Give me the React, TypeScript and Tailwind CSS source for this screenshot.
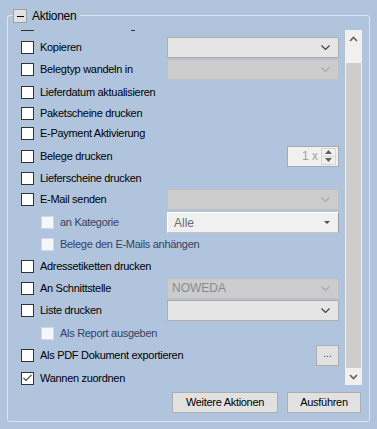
import React from 'react'

const FONT = { fontFamily: '"Liberation Sans", Arial, sans-serif' }

function Chevron({ disabled }: { disabled?: boolean }) {
  return (
    <svg width="9" height="5" viewBox="0 0 9 5" className="block">
      <polyline
        points="0.5,0.5 4.5,4.5 8.5,0.5"
        fill="none"
        stroke={disabled ? '#a9a9a9' : '#3c3c3c'}
        strokeWidth="1.1"
      />
    </svg>
  )
}

function CheckBox({ checked, dim }: { checked?: boolean; dim?: boolean }) {
  return (
    <div
      className={
        'w-[13px] h-[13px] flex-shrink-0 border flex items-center justify-center ' +
        (dim ? 'bg-[#f6f7f9] border-[#cfd8e4]' : 'bg-white border-[#333333]')
      }
    >
      {checked && (
        <svg width="9" height="8" viewBox="0 0 9 8" className="block">
          <polyline points="0.5,4 3,6.5 8.5,0.8" fill="none" stroke="#444" strokeWidth="1.1" />
        </svg>
      )}
    </div>
  )
}

function Combo({ disabled, text }: { disabled?: boolean; text?: string }) {
  return (
    <div
      className={
        'ml-auto w-[172px] h-[21px] border flex items-center pl-[4px] pr-[8px] ' +
        (disabled ? 'bg-[#cccccc] border-[#bfbfbf] text-[#8a8a8a]' : 'bg-[#e5e5e5] border-[#adadad]')
      }
    >
      <span className="flex-1 text-[12px]">{text}</span>
      <Chevron disabled={disabled} />
    </div>
  )
}

function Row({
  h,
  label,
  checked,
  sub,
  children,
}: {
  h: string
  label: string
  checked?: boolean
  sub?: boolean
  children?: React.ReactNode
}) {
  return (
    <div className={'flex items-center pr-[6px] ' + h + (sub ? ' pl-[20px]' : '')}>
      <CheckBox checked={checked} dim={sub} />
      <span
        className={
          'ml-[6px] text-[11px] tracking-[-0.3px] whitespace-nowrap ' + (sub ? 'text-[#34425f]' : 'text-black')
        }
      >
        {label}
      </span>
      {children}
    </div>
  )
}

export default function App() {
  return (
    <div className="w-[377px] h-[429px] bg-[#b0c4de] pt-[15px] pl-[7px] overflow-hidden" style={FONT}>
      <div className="relative w-[363px] h-[407px] border border-[#dde6f0] rounded-[3px] pt-[14px] pl-[6px] pr-[7px]">
        {/* legend over the frame line */}
        <div className="absolute -top-[9px] left-[5px] flex items-center bg-[#b0c4de] pr-[4px]">
          <div className="w-[14px] h-[14px] bg-[#e1e1e1] border border-[#a0a0a0] flex items-center justify-center">
            <div className="w-[7px] h-px bg-black" />
          </div>
          <span className="ml-[5px] text-[12px] tracking-[-0.3px] text-black">Aktionen</span>
        </div>

        <div className="flex h-[355px]">
          <div className="flex-1 overflow-hidden pl-[7px]">
            {/* scrolled-away row, only its bottom edge shows */}
            <div className="relative h-px">
              <div className="absolute left-0 w-[13px] h-px bg-[#333]" />
              <div className="absolute left-[110px] w-[4px] h-px bg-[#333]" />
            </div>
            <div className="mt-[5px] flex flex-col">
              <Row h="h-[22px]" label="Kopieren">
                <Combo />
              </Row>
              <Row h="h-[23px]" label="Belegtyp wandeln in">
                <Combo disabled />
              </Row>
              <Row h="h-[22px]" label="Lieferdatum aktualisieren" />
              <Row h="h-[20px]" label="Paketscheine drucken" />
              <Row h="h-[21px]" label="E-Payment Aktivierung" />
              <Row h="h-[24px]" label="Belege drucken">
                <div className="ml-auto w-[52px] h-[21px] bg-[#f0f0f0] border border-[#a9a9a9] flex items-center">
                  <span className="flex-1 text-right pr-[3px] text-[12px] text-[#a0a0a0]">1 x</span>
                  <div className="w-[15px] h-[17px] mr-[2px] flex flex-col border border-[#d6d6d6]">
                    <div className="flex-1 flex items-center justify-center border-b border-[#d6d6d6]">
                      <svg width="7" height="4" viewBox="0 0 7 4" className="block">
                        <polygon points="3.5,0 7,4 0,4" fill="#606060" />
                      </svg>
                    </div>
                    <div className="flex-1 flex items-center justify-center">
                      <svg width="7" height="4" viewBox="0 0 7 4" className="block">
                        <polygon points="0,0 7,0 3.5,4" fill="#606060" />
                      </svg>
                    </div>
                  </div>
                </div>
              </Row>
              <Row h="h-[20px]" label="Lieferscheine drucken" />
              <Row h="h-[23px]" label="E-Mail senden">
                <Combo disabled />
              </Row>
              <Row h="h-[23px]" label="an Kategorie" sub>
                <div className="ml-auto w-[172px] h-[21px] bg-[#f0f0f0] border border-t-white border-l-white border-r-[#9a9a9a] border-b-[#c4c4c4] flex items-center pl-[6px] pr-[8px]">
                  <span className="flex-1 text-[12px] text-[#6d6d6d]">Alle</span>
                  <svg width="6" height="3" viewBox="0 0 6 3" className="block">
                    <polygon points="0,0 6,0 3,3" fill="#505050" />
                  </svg>
                </div>
              </Row>
              <Row h="h-[21px]" label="Belege den E-Mails anhängen" sub />
              <Row h="h-[22px]" label="Adressetiketten drucken" />
              <Row h="h-[22px]" label="An Schnittstelle">
                <Combo disabled text="NOWEDA" />
              </Row>
              <Row h="h-[23px]" label="Liste drucken">
                <Combo />
              </Row>
              <Row h="h-[22px]" label="Als Report ausgeben" sub />
              <Row h="h-[23px]" label="Als PDF Dokument exportieren">
                <div className="ml-auto w-[23px] h-[21px] bg-[#e1e1e1] border border-[#adadad] flex items-center justify-center text-[10px] text-[#3a2a5a] leading-none pb-[3px]">
                  ...
                </div>
              </Row>
              <Row h="h-[22px]" label="Wannen zuordnen" checked />
            </div>
          </div>

          {/* vertical scrollbar */}
          <div className="w-[17px] flex flex-col bg-[#f0f0f0]">
            <div className="h-[17px] flex items-center justify-center">
              <svg width="9" height="6" viewBox="0 0 9 6" className="block">
                <polyline points="1,5 4.5,1.5 8,5" fill="none" stroke="#606060" strokeWidth="1.6" />
              </svg>
            </div>
            <div className="flex-1 flex flex-col pt-[16px]">
              <div className="flex-1 ml-px w-[15px] bg-[#cdcdcd]" />
            </div>
            <div className="h-[17px] flex items-center justify-center">
              <svg width="9" height="6" viewBox="0 0 9 6" className="block">
                <polyline points="1,1 4.5,4.5 8,1" fill="none" stroke="#606060" strokeWidth="1.6" />
              </svg>
            </div>
          </div>
        </div>

        <div className="mt-[7px] flex justify-end gap-[9px] pr-px">
          <div className="w-[106px] h-[21px] bg-[#e1e1e1] border border-[#adadad] flex items-center justify-center text-[11px] tracking-[-0.3px] text-black">
            Weitere Aktionen
          </div>
          <div className="w-[74px] h-[21px] bg-[#e1e1e1] border border-[#adadad] flex items-center justify-center text-[11px] tracking-[-0.3px] text-black">
            Ausführen
          </div>
        </div>
      </div>
    </div>
  )
}
